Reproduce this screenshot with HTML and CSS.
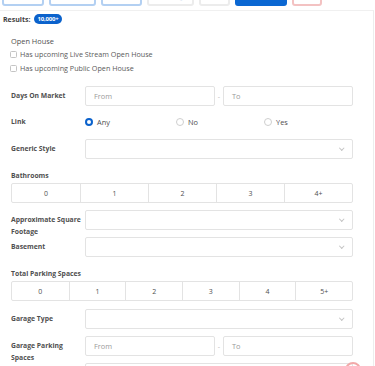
FILE: index.html
```html
<!DOCTYPE html>
<html lang="en">
<head>
<meta charset="utf-8">
<link rel="stylesheet" href="styles.css">
</head>
<body>
<div class="toolbar">
  <div class="tb w1">Location</div>
  <div class="tb w2">For Sale</div>
  <div class="tb w3">Features</div>
  <div class="tb tb-grey w4">Sold &amp; Beyond</div>
  <div class="tb tb-grey w5">Price</div>
  <div class="tb tb-fill w6">More Filters</div>
  <div class="tb tb-red w7">Clear</div>
</div>
<div class="panel">
  <div class="results"><span class="results-label">Results:</span><span class="badge">10,000+</span></div>

  <div class="openhouse">
    <div class="oh-title">Open House</div>
    <label class="check"><span class="box"></span>Has upcoming Live Stream Open House</label>
    <label class="check"><span class="box"></span>Has upcoming Public Open House</label>
  </div>

  <div class="row r-days">
    <div class="lbl">Days On Market</div>
    <div class="range"><div class="inp">From</div><span class="dash">-</span><div class="inp">To</div></div>
  </div>

  <div class="row r-link">
    <div class="lbl">Link</div>
    <div class="radios">
      <span class="radio"><span class="dot on"></span>Any</span>
      <span class="radio"><span class="dot"></span>No</span>
      <span class="radio"><span class="dot"></span>Yes</span>
    </div>
  </div>

  <div class="row r-gap">
    <div class="lbl">Generic Style</div>
    <div class="sel"><span class="chev"></span></div>
  </div>

  <div class="block r-bath">
    <div class="blbl">Bathrooms</div>
    <div class="seg seg5"><span>0</span><span>1</span><span>2</span><span>3</span><span>4+</span></div>
  </div>

  <div class="row r-gap">
    <div class="lbl">Approximate Square Footage</div>
    <div class="sel"><span class="chev"></span></div>
  </div>

  <div class="row r-gap">
    <div class="lbl">Basement</div>
    <div class="sel"><span class="chev"></span></div>
  </div>

  <div class="block r-park">
    <div class="blbl">Total Parking Spaces</div>
    <div class="seg seg6"><span>0</span><span>1</span><span>2</span><span>3</span><span>4</span><span>5+</span></div>
  </div>

  <div class="row r-gap8">
    <div class="lbl">Garage Type</div>
    <div class="sel"><span class="chev"></span></div>
  </div>

  <div class="row r-gap">
    <div class="lbl">Garage Parking Spaces</div>
    <div class="range"><div class="inp">From</div><span class="dash">-</span><div class="inp">To</div></div>
  </div>

  <div class="row r-gap">
    <div class="lbl"></div>
    <div class="sel"><span class="chev"></span></div>
  </div>
</div>
<span class="fab"></span>
</body>
</html>
```
FILE: styles.css
```css
* { box-sizing: border-box; }
html, body { margin: 0; padding: 0; background: #fff; overflow: hidden; }
body {
  font-family: "Open Sans", "Liberation Sans", sans-serif;
  font-size: 7.2px;
  color: #4f4f4f;
  width: 375px;
  height: 366px;
  position: relative;
}
.toolbar {
  display: flex;
  gap: 5px;
  padding-left: 2px;
  margin-top: -18px;
  height: 24px;
}
.tb {
  height: 24px;
  border-radius: 3px;
  border: 2px solid #b3d0f2;
  background: #fff;
  color: #b9d2f0;
  font-size: 7px;
  line-height: 20px;
  padding-top: 3px;
  text-align: center;
  white-space: nowrap;
  overflow: hidden;
}
.tb-grey { border-color: #ececec; color: #d3e0ef; }
.tb-fill { background: #0b67d2; border-color: #0b67d2; color: #6f9fe0; }
.tb-red { border-color: #f3c2c2; color: #f3c6c6; }
.w1 { width: 42px; } .w2 { width: 47px; } .w3 { width: 41px; }
.w4 { width: 47px; } .w5 { width: 31px; } .w6 { width: 52px; } .w7 { width: 30px; }

.panel {
  margin-top: 4px;
  width: 374px;
  border-top: 1px solid #f0f0f0;
  border-right: 1px solid #ededed;
  min-height: 400px;
  padding-left: 11px;
}
.results {
  height: 16px;
  display: flex;
  align-items: center;
  margin-left: -8px;
}
.results-label { font-weight: 700; color: #3f3f3f; font-size: 7px; }
.badge {
  margin-left: 3px;
  background: #0b62cc;
  color: #fff;
  font-weight: 700;
  font-size: 6px;
  height: 10px;
  line-height: 10px;
  padding: 0 4px;
  border-radius: 6px;
  letter-spacing: -0.2px;
}
.openhouse { margin-top: 8px; }
.oh-title { line-height: 12px; color: #4f4f4f; font-size: 7.4px; }
.check {
  display: flex;
  align-items: center;
  height: 14px;
  color: #5a5a5a;
  font-size: 7.2px;
}
.box {
  width: 7px;
  height: 7px;
  border: 1px solid #c4c4c4;
  border-radius: 1.5px;
  margin-right: 3px;
  margin-left: -1px;
}
.row {
  display: grid;
  grid-template-columns: 74px 268px;
  height: 20px;
  align-items: start;
}
.lbl {
  padding-top: 4px;
  line-height: 12px;
  font-weight: 700;
  color: #4f4f4f;
  font-size: 6.8px;
}
.r-days { margin-top: 11px; }
.r-link { margin-top: 6px; }
.r-gap { margin-top: 7px; }
.r-gap8 { margin-top: 8px; }
.range { display: flex; align-items: center; height: 20px; }
.inp {
  width: 130px;
  height: 20px;
  border: 1px solid #e3e3e3;
  border-radius: 2px;
  color: #9a9a9a;
  font-size: 7.4px;
  line-height: 18px;
  padding-left: 8px;
}
.dash { width: 8px; text-align: center; color: #bbb; }
.radios {
  display: grid;
  grid-template-columns: 91px 88px 89px;
  height: 20px;
  align-items: center;
}
.radio { display: flex; align-items: center; color: #4f4f4f; font-size: 7.4px; }
.dot {
  width: 8px;
  height: 8px;
  border-radius: 50%;
  border: 1px solid #cfcfcf;
  margin-right: 4px;
}
.dot.on { border: 2.5px solid #0b62cc; }
.sel {
  height: 20px;
  border: 1px solid #e3e3e3;
  border-radius: 2px;
  position: relative;
}
.chev {
  position: absolute;
  right: 9px;
  top: 6px;
  width: 3.5px;
  height: 3.5px;
  border-right: 1px solid #c4c4c4;
  border-bottom: 1px solid #c4c4c4;
  transform: rotate(45deg);
}
.r-bath { margin-top: 11px; }
.r-park { margin-top: 11px; }
.blbl { line-height: 12px; font-weight: 700; color: #4f4f4f; font-size: 6.8px; margin-bottom: 1px; }
.seg {
  width: 342px;
  height: 20px;
  border: 1px solid #e3e3e3;
  border-radius: 2px;
  display: grid;
}
.seg5 { grid-template-columns: repeat(5, 1fr); }
.seg6 { grid-template-columns: repeat(6, 1fr); }
.seg span {
  display: flex;
  align-items: center;
  justify-content: center;
  border-left: 1px solid #e3e3e3;
  font-size: 7px;
  color: #4f4f4f;
}
.seg span:first-child { border-left: none; }
.fab {
  position: absolute;
  left: 345px;
  top: 362px;
  width: 16px;
  height: 16px;
  border-radius: 50%;
  border: 2px solid #f1a9a9;
}
```
